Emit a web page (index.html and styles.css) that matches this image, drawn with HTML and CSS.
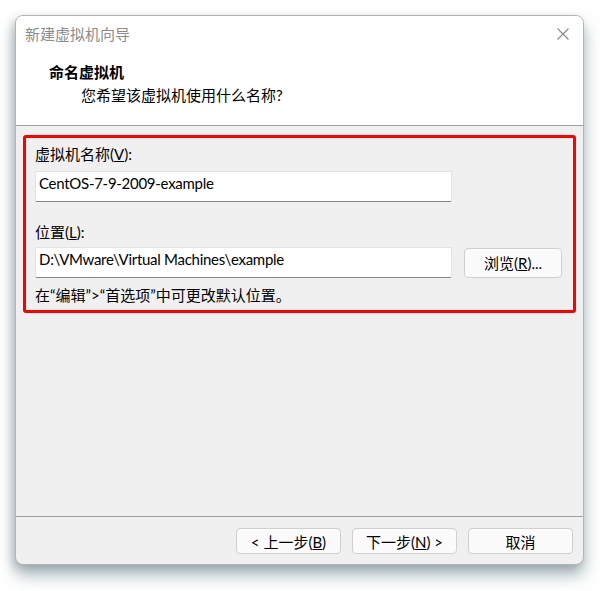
FILE: index.html
```html
<!DOCTYPE html>
<html lang="zh-CN">

<head>
  <meta charset="UTF-8">
  <title>新建虚拟机向导</title>
  <link rel="stylesheet" href="styles.css">
</head>

<body>
  <div class="page">
    <div class="dialog">
      <div class="top">
        <div class="titlebar">
          <span class="title">新建虚拟机向导</span>
          <svg class="close" width="12" height="12" viewBox="0 0 12 12">
            <path d="M0.5 0.5 L11.5 11.5 M11.5 0.5 L0.5 11.5" stroke="#8a8a8a" stroke-width="1.1" fill="none"/>
          </svg>
        </div>
        <div class="heading">命名虚拟机</div>
        <div class="subheading">您希望该虚拟机使用什么名称?</div>
      </div>

      <div class="content">
        <div class="group">
          <div class="label">虚拟机名称(<u>V</u>):</div>
          <div class="row">
            <div class="input">CentOS-7-9-2009-example</div>
          </div>

          <div class="label second">位置(<u>L</u>):</div>
          <div class="row">
            <div class="input">D:\VMware\Virtual Machines\example</div>
            <button class="btn browse">浏览(<u>R</u>)...</button>
          </div>

          <div class="hint">在“编辑”&gt;“首选项”中可更改默认位置。</div>
        </div>
      </div>

      <div class="footer">
        <button class="btn">&lt; 上一步(<u>B</u>)</button>
        <button class="btn">下一步(<u>N</u>) &gt;</button>
        <button class="btn">取消</button>
      </div>
    </div>
  </div>
</body>

</html>
```

FILE: styles.css
```css
html, body {
  margin: 0;
  background: #fff;
}

body {
  font-family: Lato, 'Noto Sans CJK SC', sans-serif;
  font-size: 15px;
  color: #000;
}

.page {
  height: 591px;
  padding: 15px 0 0 15px;
  box-sizing: border-box;
}

.dialog {
  width: 567px;
  height: 548px;
  border: 1px solid #b4b4b4;
  border-radius: 8px;
  background: #f0f0f0;
  display: flex;
  flex-direction: column;
  overflow: hidden;
  box-shadow: 0 10px 16px rgba(80, 110, 120, 0.5), -3px 3px 8px rgba(0, 0, 0, 0.15);
}

.top {
  background: #fff;
  height: 109px;
  border-bottom: 1px solid #a0a0a0;
}

.titlebar {
  display: flex;
  justify-content: space-between;
  align-items: center;
  height: 20px;
  padding: 8px 14px 0 9px;
}

.title {
  color: #8c8c8c;
  line-height: 20px;
}

.heading {
  margin: 18px 0 0 33px;
  font-weight: bold;
  line-height: 20px;
}

.subheading {
  margin: 3px 0 0 65px;
  line-height: 20px;
}

.content {
  flex: 1;
  padding: 9px 7px 0 7px;
}

.group {
  border: 3px solid #ff0000;
  border-radius: 3px;
  padding: 6px 9px 5px 9px;
  height: 161px;
}

.label {
  line-height: 20px;
  margin-bottom: 7px;
}

.label.second {
  margin-top: 20px;
  margin-bottom: 5px;
}

.row {
  display: flex;
  align-items: center;
}

.input {
  width: 412px;
  height: 29px;
  line-height: 22px;
  padding-left: 3px;
  background: #fff;
  border: 1px solid #e2e2e2;
  border-bottom: 1px solid #868686;
  border-radius: 2px;
  white-space: nowrap;
  letter-spacing: -0.28px;
}

.btn {
  font-family: Lato, 'Noto Sans CJK SC', sans-serif;
  font-size: 15px;
  color: #000;
  background: #fbfbfb;
  border: 1px solid #d0d0d0;
  border-radius: 4px;
  padding: 0;
  width: 105px;
  height: 26px;
}

.browse {
  margin-left: 12px;
  width: 98px;
  height: 30px;
}

.hint {
  margin-top: 7px;
  line-height: 20px;
}

.footer {
  border-top: 1px solid #a0a0a0;
  height: 36px;
  padding: 11px 10px 0 0;
  display: flex;
  justify-content: flex-end;
  gap: 11px;
}
```
